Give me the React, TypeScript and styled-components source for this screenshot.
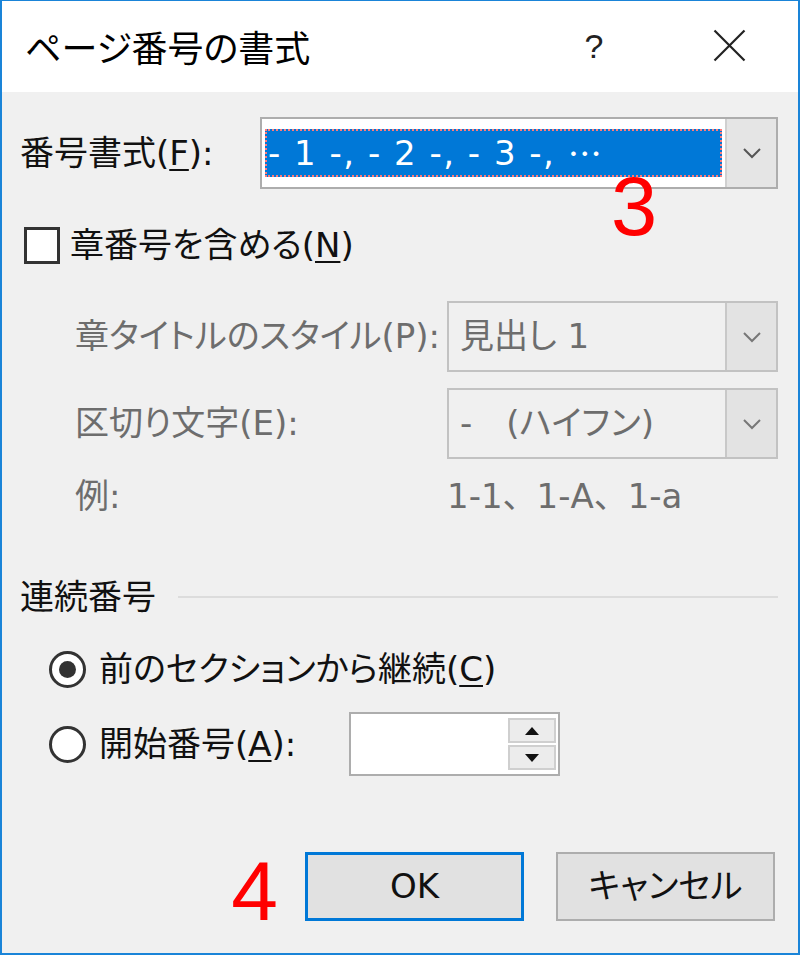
import React from "react";
import styled, { createGlobalStyle } from "styled-components";

const Global = createGlobalStyle`
  html, body { margin: 0; padding: 0; background: #ffffff; }
  body { font-family: "DejaVu Sans", "Noto Sans CJK JP", sans-serif; }
  * { box-sizing: border-box; }
`;

const Window = styled.div`
  position: relative;
  width: 800px;
  height: 955px;
  background: #f0f0f0;
  border: 2px solid #1a84d8;
  border-top-width: 1px;
  display: flex;
  flex-direction: column;
  color: #111;
  font-size: 34px;
  line-height: 1;
  font-feature-settings: "palt";
`;

const TitleBar = styled.div`
  height: 91px;
  background: #ffffff;
  display: flex;
  align-items: center;
  padding: 0 0 0 23px;
  flex-shrink: 0;
`;

const Title = styled.div`
  flex: 1;
  font-family: "Noto Sans CJK JP", sans-serif;
  font-size: 36px;
  color: #000;
  padding-bottom: 2px;
`;

const TitleButton = styled.div<{ $w: number }>`
  width: ${(p) => p.$w}px;
  height: 91px;
  display: flex;
  align-items: center;
  justify-content: center;
  font-family: "Liberation Sans", sans-serif;
  font-size: 34px;
  color: #222;
  padding-bottom: 2px;
`;

const Body = styled.div`
  position: relative;
  flex: 1;
  display: flex;
  flex-direction: column;
  padding: 25px 20px 0 18px;
`;

const Row = styled.div<{ $h: number; $indent?: number; $mt?: number }>`
  display: flex;
  align-items: center;
  height: ${(p) => p.$h}px;
  padding-left: ${(p) => p.$indent ?? 0}px;
  margin-top: ${(p) => p.$mt ?? 0}px;
`;

const Label = styled.div<{ $w?: number; $disabled?: boolean; $full?: boolean }>`
  width: ${(p) => (p.$w ? `${p.$w}px` : "auto")};
  flex-shrink: 0;
  color: ${(p) => (p.$disabled ? "#6d6d6d" : "#111")};
  white-space: nowrap;
  padding-bottom: 1px;
  font-feature-settings: ${(p) => (p.$full ? "normal" : "\"palt\"")};
`;

const U = styled.span`
  text-decoration: underline;
  text-underline-offset: 4px;
  text-decoration-thickness: 2px;
`;

const Cjk = styled.span`
  font-family: "Noto Sans CJK JP", sans-serif;
  font-feature-settings: normal;
  letter-spacing: 0;
`;

const Combo = styled.div<{ $w: number; $disabled?: boolean }>`
  width: ${(p) => p.$w}px;
  height: 100%;
  display: flex;
  border: 2px solid ${(p) => (p.$disabled ? "#c2c2c2" : "#adadad")};
  background: ${(p) => (p.$disabled ? "#f0f0f0" : "#ffffff")};
`;

const ComboText = styled.div<{ $disabled?: boolean }>`
  flex: 1;
  display: flex;
  align-items: center;
  padding: 0 0 1px 11px;
  color: ${(p) => (p.$disabled ? "#6d6d6d" : "#111")};
  white-space: pre;
`;

const ComboField = styled.div`
  flex: 1;
  padding: 10px 3px 10px 3px;
  display: flex;
`;

const Selection = styled.div`
  flex: 1;
  background: #0078d7;
  color: #ffffff;
  outline: 2px dotted #ff7a7a;
  outline-offset: -2px;
  display: flex;
  align-items: center;
  padding: 0 0 1px 3px;
  white-space: pre;
  letter-spacing: 1.5px;
`;

const DropButton = styled.div<{ $disabled?: boolean }>`
  width: 51px;
  display: flex;
  align-items: center;
  justify-content: center;
  background: ${(p) => (p.$disabled ? "#e3e3e3" : "#e5e5e5")};
  border-left: 2px solid ${(p) => (p.$disabled ? "#c8c8c8" : "#d0d0d0")};
`;

const Chevron = ({ color = "#555" }: { color?: string }) => (
  <svg width="20" height="12" viewBox="0 0 20 12">
    <path d="M2 2 L10 10 L18 2" fill="none" stroke={color} strokeWidth="2" />
  </svg>
);

const Annotation = styled.div`
  position: absolute;
  color: #ff0000;
  font-family: "Liberation Sans", sans-serif;
  font-size: 83px;
  line-height: 1;
`;

const InlineAnnotation = styled.div`
  color: #ff0000;
  font-family: "Liberation Sans", sans-serif;
  font-size: 84px;
  line-height: 69px;
  height: 69px;
  margin: 5px 27px 0 0;
`;

const CheckBox = styled.div`
  width: 36px;
  height: 37px;
  border: 3px solid #333;
  background: #fff;
  margin: 0 10px 0 4px;
  flex-shrink: 0;
`;

const Radio = styled.div<{ $checked?: boolean }>`
  width: 37px;
  height: 37px;
  border-radius: 50%;
  border: 3px solid #333;
  background: #fff;
  display: flex;
  align-items: center;
  justify-content: center;
  margin-right: 13px;
  flex-shrink: 0;
  &::after {
    content: "";
    display: ${(p) => (p.$checked ? "block" : "none")};
    width: 17px;
    height: 17px;
    border-radius: 50%;
    background: #333;
  }
`;

const GroupHeader = styled.div`
  display: flex;
  align-items: center;
  gap: 22px;
  height: 40px;
  margin-top: 61px;
`;

const Rule = styled.div`
  flex: 1;
  height: 2px;
  background: #dcdcdc;
`;

const SpinBox = styled.div`
  width: 211px;
  height: 64px;
  border: 2px solid #adadad;
  background: #fff;
  display: flex;
  justify-content: flex-end;
  padding: 4px 2px;
`;

const SpinButtons = styled.div`
  width: 48px;
  display: flex;
  flex-direction: column;
  gap: 2px;
`;

const SpinButton = styled.div`
  flex: 1;
  border: 2px solid #cfcfcf;
  background: #ececec;
  display: flex;
  align-items: center;
  justify-content: center;
`;

const Footer = styled.div`
  display: flex;
  justify-content: flex-end;
  align-items: flex-start;
  margin-top: auto;
  margin-bottom: 27px;
  padding-right: 3px;
`;

const Button = styled.div<{ $default?: boolean }>`
  width: 219px;
  height: 69px;
  display: flex;
  align-items: center;
  justify-content: center;
  background: #e1e1e1;
  border: ${(p) => (p.$default ? "3px solid #0078d7" : "2px solid #adadad")};
  margin-left: ${(p) => (p.$default ? "0" : "32px")};
  color: #111;
  padding-bottom: 2px;
`;

const SpinArrow = ({ up }: { up?: boolean }) => (
  <svg width="14" height="8" viewBox="0 0 14 8">
    <path d={up ? "M7 0 L14 8 L0 8 Z" : "M0 0 L14 0 L7 8 Z"} fill="#111" />
  </svg>
);

export default function App() {
  return (
    <>
      <Global />
      <Window>
        <TitleBar>
          <Title>ページ番号の書式</Title>
          <TitleButton $w={132}>?</TitleButton>
          <TitleButton $w={138}>
            <svg width="33" height="33" viewBox="0 0 33 33">
              <path d="M1.5 1.5 L31.5 31.5 M31.5 1.5 L1.5 31.5" stroke="#222" strokeWidth="2.2" fill="none" />
            </svg>
          </TitleButton>
        </TitleBar>
        <Body>
          <Row $h={72}>
            <Label $w={240}>
              番号書式(<U>F</U>):
            </Label>
            <Combo $w={520}>
              <ComboField>
                <Selection>
                  - 1 -, - 2 -, - 3 -, <Cjk>…</Cjk>
                </Selection>
              </ComboField>
              <DropButton>
                <Chevron />
              </DropButton>
            </Combo>
          </Row>
          <Annotation style={{ left: 609, top: 73 }}>3</Annotation>

          <Row $h={40} $mt={36}>
            <CheckBox />
            <Label>
              章番号を含める(<U>N</U>)
            </Label>
          </Row>

          <Row $h={71} $indent={55} $mt={36}>
            <Label $w={372} $disabled>
              章タイトルのスタイル(P):
            </Label>
            <Combo $w={333} $disabled>
              <ComboText $disabled>見出し 1</ComboText>
              <DropButton $disabled>
                <Chevron color="#777" />
              </DropButton>
            </Combo>
          </Row>

          <Row $h={71} $indent={55} $mt={16}>
            <Label $w={372} $disabled>
              区切り文字(E):
            </Label>
            <Combo $w={333} $disabled>
              <ComboText $disabled>-　(ハイフン)</ComboText>
              <DropButton $disabled>
                <Chevron color="#777" />
              </DropButton>
            </Combo>
          </Row>

          <Row $h={40} $indent={55} $mt={17}>
            <Label $w={372} $disabled>
              例:
            </Label>
            <Label $disabled $full>
              1-1、1-A、1-a
            </Label>
          </Row>

          <GroupHeader>
            <Label>連続番号</Label>
            <Rule />
          </GroupHeader>

          <Row $h={40} $indent={29} $mt={32}>
            <Radio $checked />
            <Label>
              前のセクションから継続(<U>C</U>)
            </Label>
          </Row>

          <Row $h={64} $indent={29} $mt={23}>
            <Radio />
            <Label $w={250}>
              開始番号(<U>A</U>):
            </Label>
            <SpinBox>
              <SpinButtons>
                <SpinButton>
                  <SpinArrow up />
                </SpinButton>
                <SpinButton>
                  <SpinArrow />
                </SpinButton>
              </SpinButtons>
            </SpinBox>
          </Row>

          <Footer>
            <InlineAnnotation>4</InlineAnnotation>
            <Button $default>OK</Button>
            <Button>キャンセル</Button>
          </Footer>
        </Body>
      </Window>
    </>
  );
}
